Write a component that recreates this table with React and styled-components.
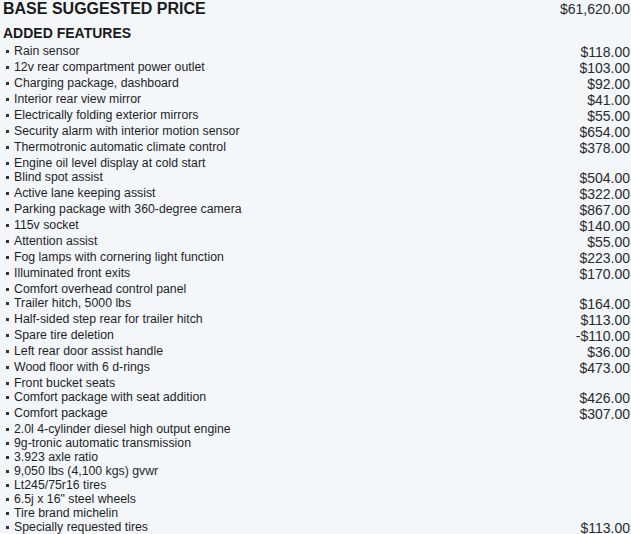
import React from "react";
import styled, { createGlobalStyle } from "styled-components";

const GlobalStyle = createGlobalStyle`
    html, body {
        margin: 0;
        padding: 0;
        height: 100%;
        overflow: hidden;
        background-color: #f3f7fa;
    }

    body {
        font-family: "Liberation Sans", Arial, sans-serif;
        color: #222;
    }
`;

const Sheet = styled.div`
    padding: 0 1px 0 3px;
`;

const PriceHeader = styled.div`
    display: flex;
    justify-content: space-between;
    align-items: baseline;

    & h1 {
        margin: 0;
        font-size: 16px;
        line-height: 17px;
        font-weight: bold;
        color: #1a1a1a;
    }
`;

const Amount = styled.span`
    font-size: 14px;
    line-height: 16px;
    white-space: nowrap;
    color: #2a2a2a;
`;

const SectionTitle = styled.h2`
    margin: 8px 0 3px;
    font-size: 14px;
    line-height: 16px;
    font-weight: bold;
    color: #1a1a1a;
`;

const FeatureList = styled.ul`
    list-style: none;
    margin: 0;
    padding: 0;
`;

const Feature = styled.li`
    display: flex;
    justify-content: space-between;
    align-items: flex-start;
`;

const Label = styled.span`
    font-size: 12.3px;
    line-height: 14px;
    color: #1f1f1f;

    &::before {
        content: "";
        display: inline-block;
        width: 3px;
        height: 3px;
        margin: 0 5px 1px 3px;
        background-color: #333;
        vertical-align: 1px;
    }
`;

const features = [
    ["Rain sensor", "$118.00"],
    ["12v rear compartment power outlet", "$103.00"],
    ["Charging package, dashboard", "$92.00"],
    ["Interior rear view mirror", "$41.00"],
    ["Electrically folding exterior mirrors", "$55.00"],
    ["Security alarm with interior motion sensor", "$654.00"],
    ["Thermotronic automatic climate control", "$378.00"],
    ["Engine oil level display at cold start"],
    ["Blind spot assist", "$504.00"],
    ["Active lane keeping assist", "$322.00"],
    ["Parking package with 360-degree camera", "$867.00"],
    ["115v socket", "$140.00"],
    ["Attention assist", "$55.00"],
    ["Fog lamps with cornering light function", "$223.00"],
    ["Illuminated front exits", "$170.00"],
    ["Comfort overhead control panel"],
    ["Trailer hitch, 5000 lbs", "$164.00"],
    ["Half-sided step rear for trailer hitch", "$113.00"],
    ["Spare tire deletion", "-$110.00"],
    ["Left rear door assist handle", "$36.00"],
    ["Wood floor with 6 d-rings", "$473.00"],
    ["Front bucket seats"],
    ["Comfort package with seat addition", "$426.00"],
    ["Comfort package", "$307.00"],
    ["2.0l 4-cylinder diesel high output engine"],
    ["9g-tronic automatic transmission"],
    ["3.923 axle ratio"],
    ["9,050 lbs (4,100 kgs) gvwr"],
    ["Lt245/75r16 tires"],
    ['6.5j x 16" steel wheels'],
    ["Tire brand michelin"],
    ["Specially requested tires", "$113.00"],
];

function App() {
    return (
        <>
            <GlobalStyle />
            <Sheet>
                <PriceHeader>
                    <h1>BASE SUGGESTED PRICE</h1>
                    <Amount>$61,620.00</Amount>
                </PriceHeader>
                <SectionTitle>ADDED FEATURES</SectionTitle>
                <FeatureList>
                    {features.map(([name, price]) => (
                        <Feature key={name}>
                            <Label>{name}</Label>
                            {price && <Amount>{price}</Amount>}
                        </Feature>
                    ))}
                </FeatureList>
            </Sheet>
        </>
    );
}

export default App;
